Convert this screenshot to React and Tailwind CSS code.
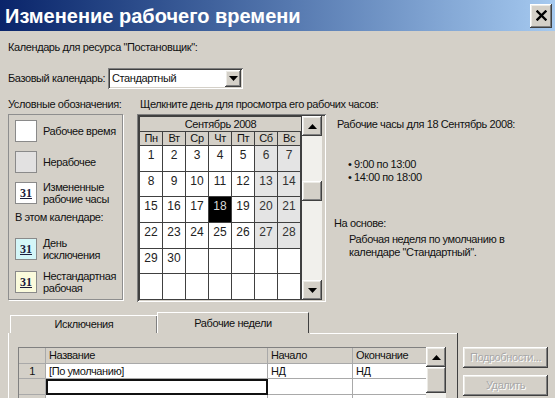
import React from "react";

const raised =
  "shadow-[inset_-1px_-1px_0_#404040,inset_1px_1px_0_#ffffff,inset_-2px_-2px_0_#808080,inset_2px_2px_0_#ecebe6]";
const sunken =
  "shadow-[inset_1px_1px_0_#808080,inset_-1px_-1px_0_#ffffff,inset_2px_2px_0_#404040,inset_-2px_-2px_0_#d4d0c8]";

function Arrow({ up }) {
  return (
    <svg width="9" height="5" viewBox="0 0 9 5">
      {up ? <path d="M0 5 L4.5 0 L9 5 Z" fill="#000" /> : <path d="M0 0 L4.5 5 L9 0 Z" fill="#000" />}
    </svg>
  );
}

function Swatch({ bg, mark }) {
  return (
    <div
      className={`w-[22px] h-[22px] shrink-0 border border-[#8a8a8a] flex items-center justify-center ${bg}`}
    >
      {mark && (
        <span className="font-['Liberation_Serif',serif] font-bold text-[12px] leading-none underline tracking-normal text-[#1c1c3c]">
          31
        </span>
      )}
    </div>
  );
}

function LegendItem({ bg, mark, children }) {
  return (
    <div className="flex items-center gap-[6px]">
      <Swatch bg={bg} mark={mark} />
      <div className="leading-[12px] whitespace-nowrap">{children}</div>
    </div>
  );
}

const days = [
  [1, 2, 3, 4, 5, 6, 7],
  [8, 9, 10, 11, 12, 13, 14],
  [15, 16, 17, 18, 19, 20, 21],
  [22, 23, 24, 25, 26, 27, 28],
  [29, 30, null, null, null, null, null],
  [null, null, null, null, null, null, null],
];

function Calendar() {
  const names = ["Пн", "Вт", "Ср", "Чт", "Пт", "Сб", "Вс"];
  return (
    <div className={`w-[189px] h-[188px] bg-[#d4d0c8] p-[2px] flex ${sunken}`}>
      <div className="w-[163px] flex flex-col bg-[#404040] p-px gap-px">
        <div className="h-[14px] bg-[#d4d0c8] text-center leading-[14px]">Сентябрь 2008</div>
        <div className="grid grid-cols-[repeat(7,22px)] gap-px">
          {names.map((n) => (
            <div key={n} className="h-[13px] bg-[#d4d0c8] text-center leading-[13px]">
              {n}
            </div>
          ))}
        </div>
        <div className="flex-1 grid grid-cols-[repeat(7,22px)] grid-rows-6 gap-px">
          {days.flat().map((d, i) => {
            const col = i % 7;
            const weekend = d !== null && col >= 5;
            const sel = d === 18;
            return (
              <div
                key={i}
                className={`text-center text-[12px] leading-[14px] pt-[2px] tracking-normal ${
                  sel ? "bg-black text-[#d8d8d8]" : weekend ? "bg-[#e4e4e4] text-[#333]" : "bg-white text-[#222]"
                }`}
              >
                {d ?? ""}
              </div>
            );
          })}
        </div>
      </div>
      <div className="w-[20px] flex flex-col bg-[#f1f0ec]">
        <div className={`h-[20px] bg-[#d4d0c8] flex items-center justify-center ${raised}`}>
          <Arrow up />
        </div>
        <div className="h-[45px]" />
        <div className={`h-[20px] bg-[#d4d0c8] ${raised}`} />
        <div className="flex-1" />
        <div className={`h-[20px] bg-[#d4d0c8] flex items-center justify-center ${raised}`}>
          <Arrow />
        </div>
      </div>
    </div>
  );
}

function Table() {
  const cell = "border-r border-b border-[#a9a9a9] px-[3px]";
  return (
    <div className="flex">
      <div className="w-[408px] border-l border-t border-[#808080]">
        <div className="grid grid-cols-[27px_222px_85px_74px] h-[16px] bg-[#d4d0c8] leading-[15px]">
          <div className={cell}></div>
          <div className={cell}>Название</div>
          <div className={cell}>Начало</div>
          <div className={cell}>Окончание</div>
        </div>
        <div className="grid grid-cols-[27px_222px_85px_74px] h-[15px] leading-[14px]">
          <div className={`${cell} bg-[#d4d0c8] text-center`}>1</div>
          <div className={`${cell} bg-white`}>[По умолчанию]</div>
          <div className={`${cell} bg-white`}>НД</div>
          <div className={`${cell} bg-white`}>НД</div>
        </div>
        <div className="grid grid-cols-[27px_222px_85px_74px] h-[16px]">
          <div className={`${cell} bg-[#d4d0c8]`}></div>
          <div className="border-2 border-[#111] bg-white"></div>
          <div className={`${cell} bg-white`}></div>
          <div className={`${cell} bg-white`}></div>
        </div>
        <div className="grid grid-cols-[27px_222px_85px_74px] h-[16px]">
          <div className={`${cell} bg-[#d4d0c8]`}></div>
          <div className={`${cell} bg-white`}></div>
          <div className={`${cell} bg-white`}></div>
          <div className={`${cell} bg-white`}></div>
        </div>
      </div>
      <div className="w-[20px] flex flex-col bg-[#f1f0ec]">
        <div className={`h-[20px] bg-[#d4d0c8] flex items-center justify-center ${raised}`}>
          <Arrow up />
        </div>
        <div className={`h-[26px] bg-[#d4d0c8] ${raised}`} />
      </div>
    </div>
  );
}

function DisButton({ children }) {
  return (
    <div
      className={`w-[85px] h-[21px] bg-[#d4d0c8] flex items-center justify-center text-[#a8a8a8] [text-shadow:1px_1px_0_#ffffff] ${raised}`}
    >
      {children}
    </div>
  );
}

export default function App() {
  return (
    <div className="w-[555px] h-[398px] overflow-hidden bg-[#d4d0c8] text-[11px] tracking-[-0.4px] text-[#111] font-['Liberation_Sans',Arial,sans-serif]">
      {/* title bar */}
      <div className="h-[31px] flex items-center justify-between pl-[5px] pr-[3px] bg-linear-to-r from-[#0a246a] to-[#a6caf0]">
        <span className="text-white font-bold text-[20px] leading-none tracking-normal">Изменение рабочего времени</span>
        <div className={`w-[22px] h-[24px] bg-[#d4d0c8] flex items-center justify-center ${raised}`}>
          <svg width="11" height="11" viewBox="0 0 11 11">
            <path d="M1.5 1.5 L9.5 9.5 M9.5 1.5 L1.5 9.5" stroke="#000" strokeWidth="2.4" strokeLinecap="square" />
          </svg>
        </div>
      </div>

      <div className="pl-[8px]">
        <div className="mt-[10px] leading-[13px]">Календарь для ресурса "Постановщик":</div>

        <div className="mt-[14px] flex items-center h-[21px]">
          <span className="w-[100px] whitespace-nowrap">Базовый календарь:</span>
          <div className={`w-[135px] h-[21px] bg-white flex items-center justify-between pl-[4px] pr-[2px] ${sunken}`}>
            <span>Стандартный</span>
            <div className={`w-[16px] h-[17px] bg-[#d4d0c8] flex items-center justify-center ${raised}`}>
              <Arrow />
            </div>
          </div>
        </div>

        <div className="mt-[9px] flex leading-[13px] whitespace-nowrap">
          <span className="w-[132px]">Условные обозначения:</span>
          <span>Щелкните день для просмотра его рабочих часов:</span>
        </div>

        <div className="mt-[3px] flex items-start">
          {/* legend */}
          <div className="w-[115px] h-[186px] border border-[#8e8e8e] shadow-[1px_1px_0_#ffffff] pl-[6px] pt-[5px] flex flex-col">
            <LegendItem bg="bg-white">Рабочее время</LegendItem>
            <div className="mt-[9px]">
              <LegendItem bg="bg-[#e2e1e1]">Нерабочее</LegendItem>
            </div>
            <div className="mt-[8px]">
              <LegendItem bg="bg-white" mark>
                Измененные
                <br />
                рабочие часы
              </LegendItem>
            </div>
            <div className="mt-[6px] leading-[13px]">В этом календаре:</div>
            <div className="mt-[13px]">
              <LegendItem bg="bg-[#d4f6f8]" mark>
                День
                <br />
                исключения
              </LegendItem>
            </div>
            <div className="mt-[9px]">
              <LegendItem bg="bg-[#fbfbdc]" mark>
                Нестандартная
                <br />
                рабочая
              </LegendItem>
            </div>
          </div>

          <div className="ml-[14px]">
            <Calendar />
          </div>

          {/* info */}
          <div className="ml-[8px] pt-[4px] leading-[13px] whitespace-nowrap">
            <div className="pl-[3px]">Рабочие часы для 18 Сентябрь 2008:</div>
            <div className="mt-[27px] pl-[14px]">
              <div>• 9:00 по 13:00</div>
              <div>• 14:00 по 18:00</div>
            </div>
            <div className="mt-[33px]">На основе:</div>
            <div className="mt-[3px] pl-[15px]">
              Рабочая неделя по умолчанию в
              <br />
              календаре "Стандартный".
            </div>
          </div>
        </div>

        {/* tabs */}
        <div className="mt-[10px] flex items-end pl-[2px] h-[21px]">
          <div className="w-[147px] h-[18px] border-t border-l border-white shadow-[inset_-1px_0_0_#808080] flex items-center justify-center">
            Исключения
          </div>
          <div className="w-[152px] h-[21px] border-t border-l border-white border-r border-r-[#404040] flex items-center justify-center">
            Рабочие недели
          </div>
        </div>
        <div className="flex">
          <div className="w-[450px] h-[80px] border-l border-white relative">
            <div className="ml-[301px] border-t border-white" />
            <div className="absolute right-0 top-0 bottom-0 border-r border-[#404040]" />
            <div className="pt-[13px] pl-[9px]">
              <Table />
            </div>
          </div>
          <div className="ml-[5px] mt-[14px] flex flex-col gap-[7px]">
            <DisButton>Подробности...</DisButton>
            <DisButton>Удалить</DisButton>
          </div>
        </div>
      </div>
    </div>
  );
}
